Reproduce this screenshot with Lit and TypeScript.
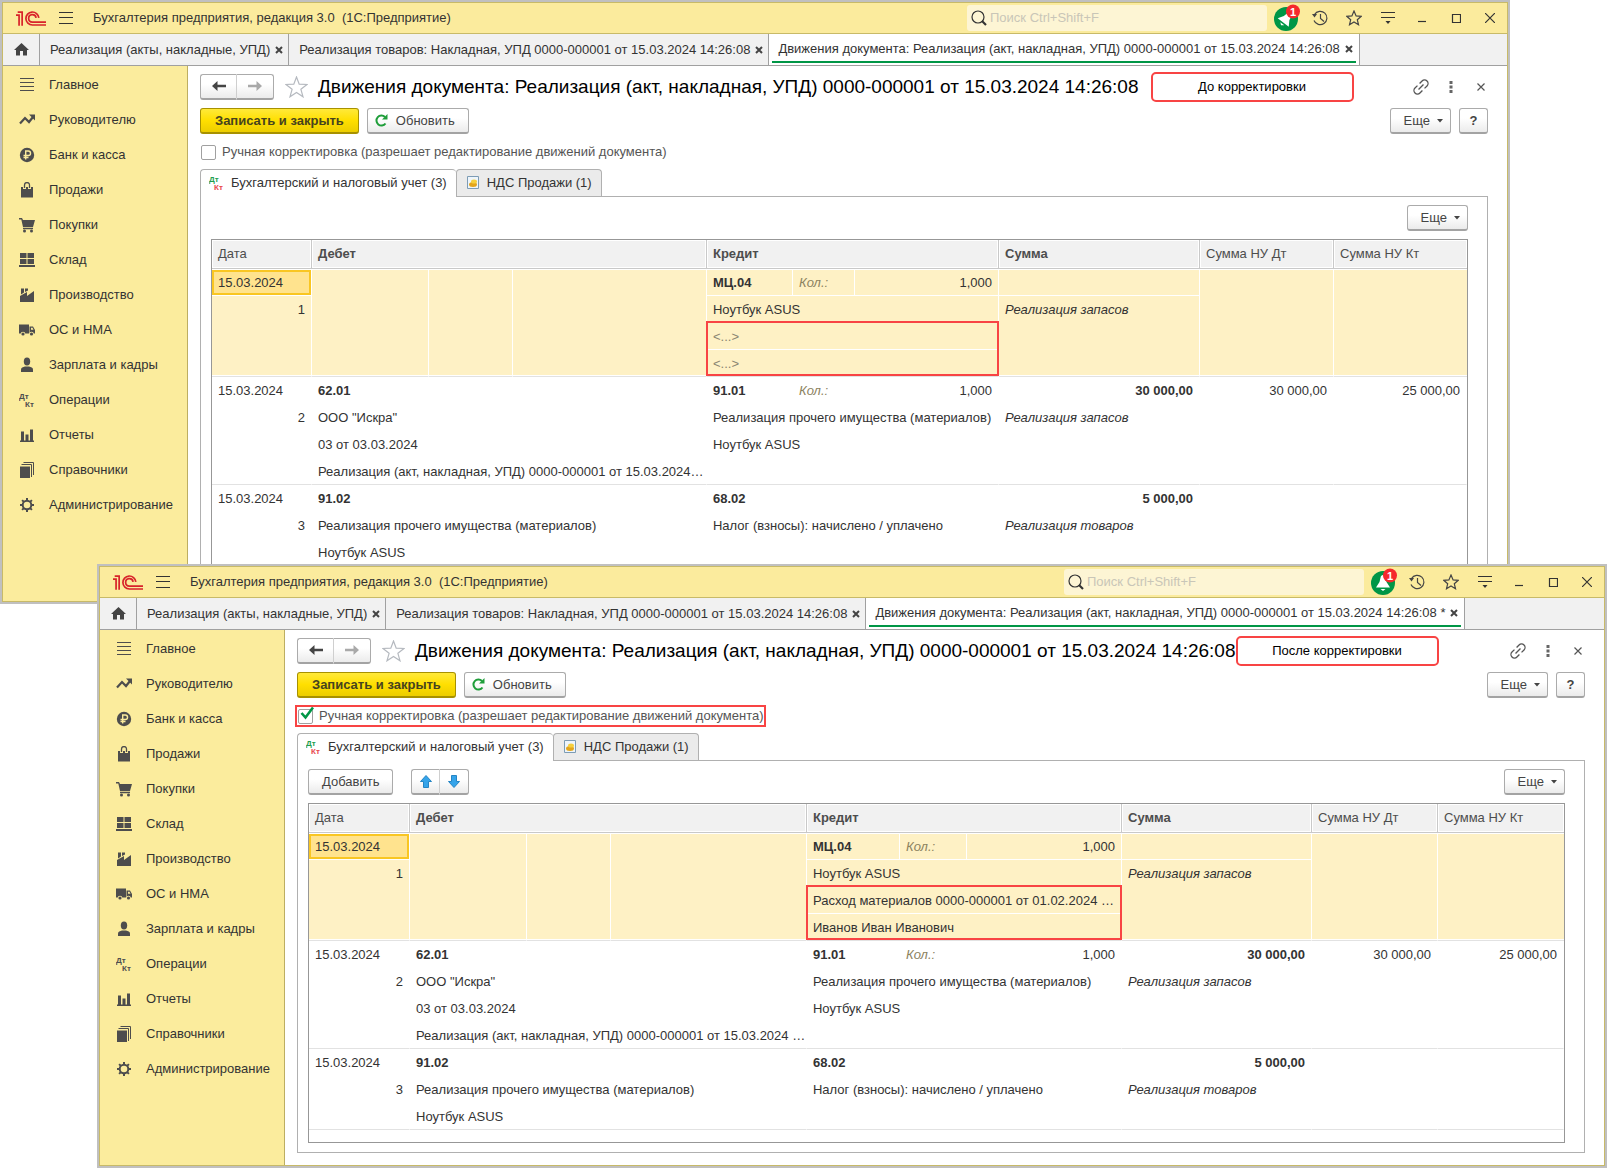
import { LitElement, html, svg, css, nothing, TemplateResult } from "lit";
import { customElement, property } from "lit/decorators.js";
import { classMap } from "lit/directives/class-map.js";

type Line = { account?: string; text?: string; blank?: boolean };

interface Entry {
  n: number;
  date: string;
  selected?: boolean;
  lines: number;
  debit: Line[];
  credit: Line[];
  qty?: string;
  sum?: string;
  note: string;
  nuDt?: string;
  nuKt?: string;
}

interface WindowData {
  star: string;
  callout: string;
  calloutClass: string;
  manual: boolean;
  creditLines: Line[];
  saleDocument: string;
}

const before: WindowData = {
  star: "",
  callout: "До корректировки",
  calloutClass: "wide-gap",
  manual: false,
  creditLines: [
    { account: "МЦ.04" },
    { text: "Ноутбук ASUS" },
    { text: "<...>", blank: true },
    { text: "<...>", blank: true },
  ],
  saleDocument: "Реализация (акт, накладная, УПД) 0000-000001 от 15.03.2024…",
};

const after: WindowData = {
  star: " *",
  callout: "После корректировки",
  calloutClass: "",
  manual: true,
  creditLines: [
    { account: "МЦ.04" },
    { text: "Ноутбук ASUS" },
    { text: "Расход материалов 0000-000001 от 01.02.2024 …" },
    { text: "Иванов Иван Иванович" },
  ],
  saleDocument: "Реализация (акт, накладная, УПД) 0000-000001 от 15.03.2024 …",
};

const buildEntries = (w: WindowData): Entry[] => [
  {
    n: 1,
    date: "15.03.2024",
    selected: true,
    lines: 4,
    debit: [],
    credit: w.creditLines,
    qty: "1,000",
    note: "Реализация запасов",
  },
  {
    n: 2,
    date: "15.03.2024",
    lines: 4,
    debit: [
      { account: "62.01" },
      { text: 'ООО "Искра"' },
      { text: "03 от 03.03.2024" },
      { text: w.saleDocument },
    ],
    credit: [
      { account: "91.01" },
      { text: "Реализация прочего имущества (материалов)" },
      { text: "Ноутбук ASUS" },
    ],
    qty: "1,000",
    sum: "30 000,00",
    note: "Реализация запасов",
    nuDt: "30 000,00",
    nuKt: "25 000,00",
  },
  {
    n: 3,
    date: "15.03.2024",
    lines: 3,
    debit: [
      { account: "91.02" },
      { text: "Реализация прочего имущества (материалов)" },
      { text: "Ноутбук ASUS" },
    ],
    credit: [{ account: "68.02" }, { text: "Налог (взносы): начислено / уплачено" }],
    sum: "5 000,00",
    note: "Реализация товаров",
  },
];

const menuIcons: Record<string, TemplateResult> = {
  lines: svg`<path d="M1 1.5h14M1 5.500h14M1 9.500h14M1 13.500h14" stroke="currentColor" fill="none"/>`,
  trend: svg`<path d="M1 11.5 6 6l4 4 4-5" stroke="currentColor" stroke-width="2.2" fill="none"/><path d="M10 2.500h6v6z" fill="currentColor"/>`,
  ruble: svg`<circle cx="8" cy="8" r="7.200" fill="currentColor"/><path d="M6.700 12.500v-8.500h2.600a2.200 2.200 0 0 1 0 4.500H4.500M4.500 10.500h5" stroke="#fbec9d" stroke-width="1.400" fill="none"/>`,
  bag: svg`<path d="M2 5h12v10.500H2z" fill="currentColor"/><path d="M5.500 7V3a2.500 2.500 0 0 1 5 0v4" stroke="#fbec9d" stroke-width="3" fill="none"/><path d="M5.500 6V3a2.500 2.500 0 0 1 5 0v3" stroke="currentColor" stroke-width="1.300" fill="none"/>`,
  cart: svg`<path d="M0 1h3l1 2h12l-2 7H4L2.300 2.500H0z" fill="currentColor"/><path d="M4 11.500h10" stroke="currentColor" stroke-width="1.500"/><circle cx="5.500" cy="14" r="1.500" fill="currentColor"/><circle cx="12.500" cy="14" r="1.500" fill="currentColor"/>`,
  store: svg`<path d="M1 1h6.500v5H1zM8.500 1H15v5H8.500zM1 7h6.500v5H1zM8.500 7H15v5H8.500zM0 13h16v2H0z" fill="currentColor"/>`,
  factory: svg`<path d="M1 15V9l7-4v4l7-5v11zM2 1.500h3v4L2 7.500zM6 1.500h3v2L6 5z" fill="currentColor"/>`,
  truck: svg`<path d="M0 2.500h10v9H0zM10.500 4.500H14l2 3.500v3.500h-5.500z" fill="currentColor"/><path d="M12 5.700h1.500l1 2H12z" fill="#fbec9d"/><circle cx="4" cy="12" r="2.300" fill="#fbec9d"/><circle cx="12.500" cy="12" r="2.300" fill="#fbec9d"/><circle cx="4" cy="12" r="1.600" fill="currentColor"/><circle cx="12.500" cy="12" r="1.600" fill="currentColor"/>`,
  person: svg`<ellipse cx="8" cy="4.500" rx="3.200" ry="4" fill="currentColor"/><path d="M2 15v-2.500C2 10.500 4 10 6 9.500h4c2 .500 4 1 4 3V15z" fill="currentColor"/>`,
  chart: svg`<path d="M2 4.500h3V14H2zM6.500 7.500h3V14h-3zM11 2.500h3V14h-3zM1 13.500h14V15H1z" fill="currentColor"/>`,
  books: svg`<path d="M1 4.500h10V16H1z" fill="currentColor"/><path d="M2.500 2.500h10v12.500M4.500 .500h10v12.500" stroke="currentColor" stroke-width="1" fill="none"/>`,
  gear: svg`<circle cx="8" cy="8" r="4.300" stroke="currentColor" stroke-width="2" fill="none"/><path d="M8 1v3M8 12v3M1 8h3M12 8h3M3.100 3.100l2 2M10.900 10.900l2 2M3.100 12.900l2-2M10.900 5.100l2-2" stroke="currentColor" stroke-width="2"/>`,
  dtkt: svg`<text x="0" y="7" font-size="8" font-weight="700" fill="currentColor">Дт</text><text x="6" y="15" font-size="8" font-weight="700" fill="currentColor">Кт</text>`,
};

const menu: [string, string][] = [
  ["lines", "Главное"],
  ["trend", "Руководителю"],
  ["ruble", "Банк и касса"],
  ["bag", "Продажи"],
  ["cart", "Покупки"],
  ["store", "Склад"],
  ["factory", "Производство"],
  ["truck", "ОС и НМА"],
  ["person", "Зарплата и кадры"],
  ["dtkt", "Операции"],
  ["chart", "Отчеты"],
  ["books", "Справочники"],
  ["gear", "Администрирование"],
];

const icon = (w: number, h: number, body: TemplateResult) =>
  html`<svg width=${w} height=${h} viewBox="0 0 ${w} ${h}" aria-hidden="true">${body}</svg>`;

const base = css`
  * {
    box-sizing: border-box;
  }
  svg {
    display: block;
    flex: none;
  }
  button,
  input {
    font: inherit;
    color: inherit;
    margin: 0;
  }
  a {
    color: inherit;
    text-decoration: none;
  }
`;

@customElement("entries-table")
export class EntriesTable extends LitElement {
  @property({ attribute: false }) entries: Entry[] = [];
  @property({ type: Boolean, reflect: true }) corrected = false;

  static styles = [
    base,
    css`
      :host {
        display: block;
        flex: 1;
        border: 1px solid #979797;
        padding-bottom: 12px;
      }
      table {
        width: 100%;
        table-layout: fixed;
        border-collapse: separate;
        border-spacing: 0;
      }
      .date { width: 100px; }
      .d1 { width: 117px; }
      .d2 { width: 84px; }
      .c1 { width: 86px; }
      .c2 { width: 62px; }
      .c3 { width: 144px; }
      .sum { width: 201px; }
      .nu-dt { width: 134px; }
      .nu-kt { width: 133px; }
      :host([corrected]) .date { width: 101px; }
      :host([corrected]) .c1 { width: 93px; }
      :host([corrected]) .c2 { width: 67px; }
      :host([corrected]) .c3 { width: 155px; }
      :host([corrected]) .sum { width: 190px; }
      :host([corrected]) .nu-dt,
      :host([corrected]) .nu-kt { width: 126px; }
      th,
      td {
        height: 27px;
        padding: 0 0 0 6px;
        line-height: 25px;
        text-align: left;
        vertical-align: top;
        white-space: nowrap;
      }
      th {
        height: 29px;
        line-height: 28px;
        background: #f1f1f1;
        color: #4d4d4d;
        font-weight: 400;
        border-right: 1px solid #c9c9c9;
        border-bottom: 1px solid #c9c9c9;
        box-shadow: inset 0 0 0 1px #fff;
      }
      th:last-child {
        border-right: 0;
      }
      th.strong,
      .account {
        font-weight: 700;
      }
      td {
        border-right: 1px solid transparent;
        border-bottom: 1px solid transparent;
        padding-top: 1px;
      }
      td.end {
        border-bottom-color: #e2e2e2;
      }
      td.right {
        padding-right: 6px;
        text-align: right;
      }
      .note {
        font-style: italic;
      }
      .qty-label {
        font-style: italic;
        color: #8c835f;
      }
      .blank {
        color: #8a8571;
      }
      .selected td {
        background: #fef1c5;
        border-color: #fff;
      }
      .selected tr:first-child td {
        border-top: 1px solid #fff;
        padding-top: 0;
      }
      .selected td.end {
        border-bottom-color: #e2e2e2;
        box-shadow: inset 0 -1px #fff;
      }
      .selected td.edge {
        border-right: 0;
      }
      .selected td.current {
        background: #ffe38e;
        box-shadow: inset 0 0 0 2px #f9c622;
      }
      .marked {
        position: relative;
      }
      .mark {
        position: absolute;
        z-index: 1;
        top: -2px;
        left: -1px;
        right: -1px;
        height: 55px;
        border: 2px solid #f84444;
      }
    `,
  ];

  private row(e: Entry, i: number) {
    const last = i === e.lines - 1;
    const rest = e.lines - 1;
    const d = e.debit[i];
    const c = e.credit[i];
    const end = { end: last };
    const marked = !!e.selected && i === 2;
    const debit = e.selected
      ? i === 0
        ? [0, 1, 2].map(() => html`<td class="end" rowspan=${e.lines}></td>`)
        : nothing
      : html`<td colspan="3" class=${classMap({ ...end, account: !!d?.account })}>${d?.account ?? d?.text ?? ""}</td>`;
    const credit =
      i === 0 && e.qty
        ? html`<td class="account">${c.account}</td>
            <td class="qty-label">Кол.:</td>
            <td class="right">${e.qty}</td>`
        : html`<td colspan="3" class=${classMap({ ...end, marked, account: !!c?.account, blank: !!c?.blank })}>
            ${c?.account ?? c?.text ?? ""}${marked ? html`<span class="mark"></span>` : nothing}
          </td>`;
    return html`<tr>
      ${i === 0 ? html`<td class=${classMap({ current: !!e.selected })}>${e.date}</td>` : nothing}
      ${i === 1 ? html`<td class="right end" rowspan=${rest}>${e.n}</td>` : nothing}
      ${debit}${credit}
      ${i === 0 ? html`<td class="right account">${e.sum ?? ""}</td>` : nothing}
      ${i === 1 ? html`<td class="note end" rowspan=${rest}>${e.note}</td>` : nothing}
      ${i === 0
        ? html`<td class="right end" rowspan=${e.lines}>${e.nuDt ?? ""}</td>
            <td class="right end edge" rowspan=${e.lines}>${e.nuKt ?? ""}</td>`
        : nothing}
    </tr>`;
  }

  render() {
    return html`<table>
      <colgroup>
        <col class="date" /><col class="d1" /><col class="d2" /><col />
        <col class="c1" /><col class="c2" /><col class="c3" />
        <col class="sum" /><col class="nu-dt" /><col class="nu-kt" />
      </colgroup>
      <thead>
        <tr>
          <th scope="col">Дата</th>
          <th scope="col" class="strong" colspan="3">Дебет</th>
          <th scope="col" class="strong" colspan="3">Кредит</th>
          <th scope="col" class="strong">Сумма</th>
          <th scope="col">Сумма НУ Дт</th>
          <th scope="col">Сумма НУ Кт</th>
        </tr>
      </thead>
      ${this.entries.map(
        (e) => html`<tbody class=${classMap({ selected: !!e.selected })}>
          ${Array.from({ length: e.lines }, (_, i) => this.row(e, i))}
        </tbody>`,
      )}
    </table>`;
  }
}

@customElement("ledger-window")
export class LedgerWindow extends LitElement {
  @property({ attribute: false }) data: WindowData = before;

  static styles = [
    base,
    css`
      :host {
        display: flex;
        flex-direction: column;
        min-width: 0;
        min-height: 0;
        overflow: hidden;
        border: 2px solid #c0c0c0;
        background: #fff;
      }
      .frame {
        flex: 1;
        display: flex;
        flex-direction: column;
        border: 1px solid #c8ba68;
      }
      .titlebar {
        display: flex;
        align-items: center;
        flex: none;
        height: 31px;
        background: #fbeb9d;
        border-bottom: 1px solid #c8ba68;
      }
      .logo {
        margin-left: 13px;
      }
      .icon-btn {
        display: flex;
        align-items: center;
        justify-content: center;
        flex: none;
        width: 34px;
        height: 30px;
        padding: 0;
        border: 0;
        background: none;
        color: #333;
      }
      .burger {
        margin-left: 3px;
      }
      .app-name {
        margin-left: 10px;
        white-space: pre;
      }
      .search {
        display: flex;
        align-items: center;
        gap: 3px;
        width: 300px;
        height: 26px;
        margin-left: auto;
        padding-left: 4px;
        border-radius: 3px;
        background: #fdf5d4;
      }
      .search input {
        flex: 1;
        min-width: 0;
        padding: 0;
        border: 0;
        outline: 0;
        background: none;
      }
      .search input::placeholder {
        color: #c9c6b8;
        opacity: 1;
      }
      .bell {
        width: 36px;
      }
      .doc-tabs {
        display: flex;
        flex: none;
        height: 32px;
        background: #f1f1f1;
        border-bottom: 1px solid #a0a0a0;
      }
      .home {
        width: 37px;
        height: 31px;
        border-right: 1px solid #a0a0a0;
      }
      .doc-tab {
        padding: 0 5px 0 10px;
        border-right: 1px solid #a0a0a0;
        white-space: nowrap;
      }
      .doc-tab.active {
        padding: 0 3px;
        background: #fff;
      }
      .inner {
        display: flex;
        align-items: center;
        gap: 5px;
        height: 29px;
        padding-top: 2px;
      }
      .doc-tab.active .inner {
        padding: 3px 3px 0 6px;
        border-bottom: 2px solid #009646;
      }
      .plain {
        padding: 0;
        border: 0;
        background: none;
      }
      .body {
        flex: 1;
        display: flex;
        min-height: 0;
      }
      .menu {
        flex: none;
        width: 185px;
        padding-top: 1px;
        background: #fbec9d;
        border-right: 1px solid #bdae62;
      }
      .menu a {
        display: flex;
        align-items: center;
        gap: 14px;
        height: 35px;
        padding-left: 16px;
        color: #333;
      }
      .menu svg {
        color: #4d4d4d;
      }
      .page {
        flex: 1;
        min-width: 0;
        display: flex;
        flex-direction: column;
        padding: 5px 19px 12px 12px;
      }
      .heading {
        display: flex;
        align-items: center;
        height: 31px;
      }
      .btn {
        display: inline-flex;
        align-items: center;
        justify-content: center;
        flex: none;
        height: 26px;
        padding: 0 13px;
        border: 1px solid #ababab;
        border-bottom: 2px solid #a3a3a3;
        border-radius: 3px;
        background: linear-gradient(#fff 40%, #ebebeb);
        color: #444;
        white-space: nowrap;
      }
      .pair {
        display: flex;
      }
      .pair .btn {
        width: 37px;
        padding: 0;
      }
      .pair .btn:first-child {
        border-radius: 3px 0 0 3px;
        border-right-color: #cfcfcf;
      }
      .pair .btn:last-child {
        border-left: 0;
        border-radius: 0 3px 3px 0;
      }
      .pair.small .btn {
        width: 29px;
      }
      .fav {
        width: 23px;
        margin: 0 10px 0 11px;
      }
      h1 {
        margin: 0;
        font-size: 19px;
        font-weight: 400;
        color: #000;
        white-space: nowrap;
      }
      .callout {
        flex: none;
        width: 203px;
        border: 2px solid #f84444;
        border-radius: 5px;
        line-height: 26px;
        text-align: center;
        color: #000;
      }
      .callout.wide-gap {
        margin-left: 12px;
      }
      .heading-actions {
        display: flex;
        margin-left: auto;
        margin-right: -8px;
      }
      .heading-actions .icon-btn {
        width: 30px;
      }
      .commands {
        display: flex;
        gap: 8px;
        margin-top: 6px;
      }
      .spacer {
        flex: 1;
      }
      .btn.primary {
        padding: 0 14px;
        border-color: #a79100;
        background: linear-gradient(#ffe93a, #ffdf00 50%, #eccd00);
        font-weight: 700;
        color: #46431f;
      }
      .btn.refresh {
        gap: 8px;
        padding: 0 13px 0 7px;
      }
      .btn.more {
        gap: 6px;
        padding: 0 6px 0 13px;
      }
      .btn.help {
        width: 29px;
        padding: 0;
        font-weight: 700;
      }
      .manual {
        display: flex;
        align-items: center;
        align-self: flex-start;
        gap: 6px;
        height: 22px;
        margin: 7px 0 6px -2px;
        padding: 0 0 0 1px;
        border: 2px solid transparent;
        color: #555;
      }
      .manual.marked {
        border-color: #f84444;
      }
      .manual input {
        appearance: none;
        width: 15px;
        height: 15px;
        border: 1px solid #a0a0a0;
        border-radius: 2px;
        background: #fff;
      }
      .tick {
        position: relative;
        display: flex;
      }
      .tick svg {
        position: absolute;
        left: 2px;
        top: -2px;
        pointer-events: none;
      }
      .tabs {
        display: flex;
        height: 27px;
      }
      .tabs button {
        display: flex;
        align-items: center;
        gap: 8px;
        height: 27px;
        padding: 0 9px 0 10px;
        border: 1px solid #b0b0b0;
        border-bottom: 0;
        border-radius: 4px 4px 0 0;
        background: #ebebeb;
        color: #333;
      }
      .tabs button.on {
        gap: 6px;
        height: 28px;
        padding: 0 9px 2px 8px;
        position: relative;
        background: #fff;
        border-right: 0;
      }
      .panel {
        flex: 1;
        display: flex;
        flex-direction: column;
        padding: 8px 19px 9px 10px;
        border: 1px solid #b0b0b0;
      }
      .panel-tools {
        display: flex;
        height: 26px;
        margin-bottom: 8px;
        gap: 18px;
      }
    `,
  ];

  private closeMark() {
    return html`<button class="plain" aria-label="Закрыть">
      ${icon(8, 8, svg`<path d="M1 1l6 6M7 1L1 7" stroke="#444" stroke-width="2"/>`)}
    </button>`;
  }

  private more() {
    return html`<button class="btn more">
      Еще ${icon(8, 5, svg`<path d="M1 1h6L4 4.500z" fill="#444"/>`)}
    </button>`;
  }

  render() {
    const w = this.data;
    const doc = "Реализация (акт, накладная, УПД) 0000-000001 от 15.03.2024 14:26:08";
    return html`<div class="frame">
      <header class="titlebar">
        <svg class="logo" width="30" height="15" viewBox="0 0 88 44" role="img" aria-label="1С">
          <g fill="none" stroke="#d8232a" stroke-width="5">
            <path d="M0 12h9v31M5 3h13v40" />
            <path d="M67 20a19 19 0 1 0-19 21h40M59 20a11 11 0 1 0-11 12.500h40" />
          </g>
        </svg>
        <button class="icon-btn burger" aria-label="Меню">
          ${icon(14, 12, svg`<path d="M0 .500h14M0 5.500h14M0 11.500h14" stroke="#333"/>`)}
        </button>
        <span class="app-name">Бухгалтерия предприятия, редакция 3.0  (1С:Предприятие)</span>
        <label class="search">
          ${icon(16, 16, svg`<circle cx="7" cy="7" r="6" fill="none" stroke="#333" stroke-width="1.200"/><path d="M11 11l4 4" stroke="#333" stroke-width="2.200"/>`)}
          <input type="search" placeholder="Поиск Ctrl+Shift+F" aria-label="Поиск" />
        </label>
        <button class="icon-btn bell" aria-label="Уведомления">
          ${icon(
            32,
            28,
            svg`<g transform="translate(4 0)">
              <circle cx="13" cy="15" r="12" fill="#009646"/>
              <g transform=${w.manual ? "" : "rotate(38 13 15)"}>
                <path d="M13 7c-1.500 0-2 1-2.300 2L9.500 14 6 19.500h14L16.500 14 15.300 9c-.300-1-.800-2-2.300-2z" fill="#fff"/>
                <path d="M10.500 21h5l-2.500 2z" fill="#fff"/>
              </g>
              <circle cx="20" cy="7.500" r="7" fill="#f5282c"/>
              <text x="20" y="11.500" font-size="11" font-weight="700" text-anchor="middle" fill="#fff">1</text>
            </g>`,
          )}
        </button>
        <button class="icon-btn" aria-label="История">
          ${icon(16, 16, svg`<path d="M2.500 4.500A6.700 6.700 0 1 1 2 10.500M8.500 4v4.500l3.500 3" fill="none" stroke="#444" stroke-width="1.200"/><path d="M0 4h5L2.500 7.500z" fill="#444"/>`)}
        </button>
        <button class="icon-btn" aria-label="Избранное">
          ${icon(16, 16, svg`<path d="M8 1l2.100 4.900 5.100.400-3.900 3.400 1.200 5L8 12l-4.500 2.700 1.200-5L.800 6.300l5.100-.400z" fill="none" stroke="#444" stroke-width="1.200"/>`)}
        </button>
        <button class="icon-btn" aria-label="Сервис">
          ${icon(14, 14, svg`<path d="M0 1.500h14M0 6.500h14" stroke="#333" stroke-width="1.200"/><path d="M4.500 10h5L7 13z" fill="#333"/>`)}
        </button>
        <button class="icon-btn" aria-label="Свернуть">
          ${icon(10, 10, svg`<path d="M1 8.500h8" stroke="#333" stroke-width="1.200"/>`)}
        </button>
        <button class="icon-btn" aria-label="Развернуть">
          ${icon(10, 10, svg`<path d="M1.500 1.500h8v8h-8z" fill="none" stroke="#333" stroke-width="1.200"/>`)}
        </button>
        <button class="icon-btn" aria-label="Закрыть окно">
          ${icon(10, 10, svg`<path d="M0 0l10 10M10 0L0 10" stroke="#333" stroke-width="1.200"/>`)}
        </button>
      </header>

      <nav class="doc-tabs" aria-label="Открытые окна">
        <button class="icon-btn home" aria-label="Начальная страница">
          ${icon(15, 13, svg`<path d="M7.500 0L15 7h-2v5.500H9V8H6v4.500H2V7H0z" fill="#444"/>`)}
        </button>
        <div class="doc-tab">
          <div class="inner">
            <button class="plain">Реализация (акты, накладные, УПД)</button>${this.closeMark()}
          </div>
        </div>
        <div class="doc-tab">
          <div class="inner">
            <button class="plain">Реализация товаров: Накладная, УПД 0000-000001 от 15.03.2024 14:26:08</button>${this.closeMark()}
          </div>
        </div>
        <div class="doc-tab active">
          <div class="inner">
            <button class="plain">Движения документа: ${doc}${w.star}</button>${this.closeMark()}
          </div>
        </div>
      </nav>

      <div class="body">
        <nav class="menu" aria-label="Разделы">
          ${menu.map(([id, label]) => html`<a href="#">${icon(16, 16, menuIcons[id])}${label}</a>`)}
        </nav>
        <main class="page">
          <div class="heading">
            <div class="pair">
              <button class="btn" aria-label="Назад">
                ${icon(14, 12, svg`<path d="M0 6l5.500-5v3.800H14v2.400H5.500V11z" fill="#444"/>`)}
              </button>
              <button class="btn" aria-label="Вперед">
                ${icon(14, 12, svg`<path d="M14 6L8.500 1v3.800H0v2.400h8.500V11z" fill="#a9a9a9"/>`)}
              </button>
            </div>
            <button class="icon-btn fav" aria-label="В избранное">
              ${icon(23, 22, svg`<path d="M11.500 1l2.700 7.200 7.800.300-6.100 4.800 2.100 7.500-6.500-4.300L5 20.800l2.100-7.500L1 8.500l7.800-.300z" fill="none" stroke="#b5b9bf" stroke-width="1.200"/>`)}
            </button>
            <h1>Движения документа: ${doc}</h1>
            <div class="callout ${w.calloutClass}">${w.callout}</div>
            <div class="heading-actions">
              <button class="icon-btn" aria-label="Получить ссылку">
                ${icon(16, 16, svg`<g fill="none" stroke="#555" stroke-width="1.300" transform="rotate(-45 8 8)"><path d="M6.500 4.500h-3.500a3.500 3.500 0 0 0 0 7h3.500M9.500 4.500H13a3.500 3.500 0 0 1 0 7H9.500M4.500 8h7"/></g>`)}
              </button>
              <button class="icon-btn" aria-label="Действия">
                ${icon(4, 12, svg`<path d="M.500 0h3v3h-3zM.500 4.500h3v3h-3zM.500 9h3v3h-3z" fill="#666"/>`)}
              </button>
              <button class="icon-btn" aria-label="Закрыть форму">
                ${icon(8, 8, svg`<path d="M.500.500l7 7M7.500.500l-7 7" stroke="#555" stroke-width="1.200"/>`)}
              </button>
            </div>
          </div>

          <div class="commands">
            <button class="btn primary">Записать и закрыть</button>
            <button class="btn refresh">
              ${icon(13, 13, svg`<path d="M10.500 9.500a5 5 0 1 1-.500-6.500" fill="none" stroke="#1f9e3a" stroke-width="2"/><path d="M12.500 0v5.500H7z" fill="#1f9e3a"/>`)}
              Обновить
            </button>
            <span class="spacer"></span>
            ${this.more()}
            <button class="btn help" aria-label="Справка">?</button>
          </div>

          <label class="manual ${w.manual ? "marked" : ""}">
            <span class="tick">
              <input type="checkbox" .checked=${w.manual} />
              ${w.manual ? icon(14, 14, svg`<path d="M1.500 6l4 4.500L13 .500" fill="none" stroke="#009646" stroke-width="2.600"/>`) : nothing}
            </span>
            Ручная корректировка (разрешает редактирование движений документа)
          </label>

          <div class="tabs" role="tablist">
            <button class="on" role="tab" aria-selected="true">
              ${icon(16, 16, svg`<text x="0" y="7" font-size="8" font-weight="700" fill="#1f9e50">Дт</text><text x="5" y="15" font-size="8" font-weight="700" fill="#e8484c">Кт</text>`)}
              Бухгалтерский и налоговый учет (3)
            </button>
            <button role="tab" aria-selected="false">
              ${icon(12, 14, svg`<path d="M.500.500h11v12H.500z" fill="#eef5fb" stroke="#7d9cb5"/><ellipse cx="6" cy="8.500" rx="4" ry="2.500" fill="#e3a51c"/><ellipse cx="7" cy="5.500" rx="3" ry="2" fill="#f6cf3c"/>`)}
              НДС Продажи (1)
            </button>
          </div>
          <section class="panel" role="tabpanel">
            <div class="panel-tools">
              ${w.manual
                ? html`<button class="btn">Добавить</button>
                    <div class="pair small">
                      <button class="btn" aria-label="Вверх">
                        ${icon(12, 13, svg`<path d="M6 .500L11.500 6.500H8.500v6h-5v-6H.500z" fill="#35a4ea" stroke="#2585c4"/>`)}
                      </button>
                      <button class="btn" aria-label="Вниз">
                        ${icon(12, 13, svg`<path d="M6 12.500L11.500 6.500H8.500v-6h-5v6H.500z" fill="#35a4ea" stroke="#2585c4"/>`)}
                      </button>
                    </div>`
                : nothing}
              <span class="spacer"></span>
              ${this.more()}
            </div>
            <entries-table .entries=${buildEntries(w)} ?corrected=${w.manual}></entries-table>
          </section>
        </main>
      </div>
    </div>`;
  }
}

@customElement("app-root")
export class AppRoot extends LitElement {
  static styles = css`
    :host {
      display: block;
      font: 13px/16px "Liberation Sans", Arial, sans-serif;
      color: #333;
    }
    .desktop {
      display: grid;
      grid-template-columns: 97px minmax(0, 1fr) 97px;
      grid-template-rows: 564px 40px 1fr;
      min-height: 100vh;
      background: #fff;
    }
    .back {
      grid-column: 1 / 3;
      grid-row: 1 / 3;
    }
    .front {
      grid-column: 2 / 4;
      grid-row: 2 / 4;
      z-index: 1;
    }
  `;

  render() {
    return html`<div class="desktop">
      <ledger-window class="back" .data=${before}></ledger-window>
      <ledger-window class="front" .data=${after}></ledger-window>
    </div>`;
  }
}
